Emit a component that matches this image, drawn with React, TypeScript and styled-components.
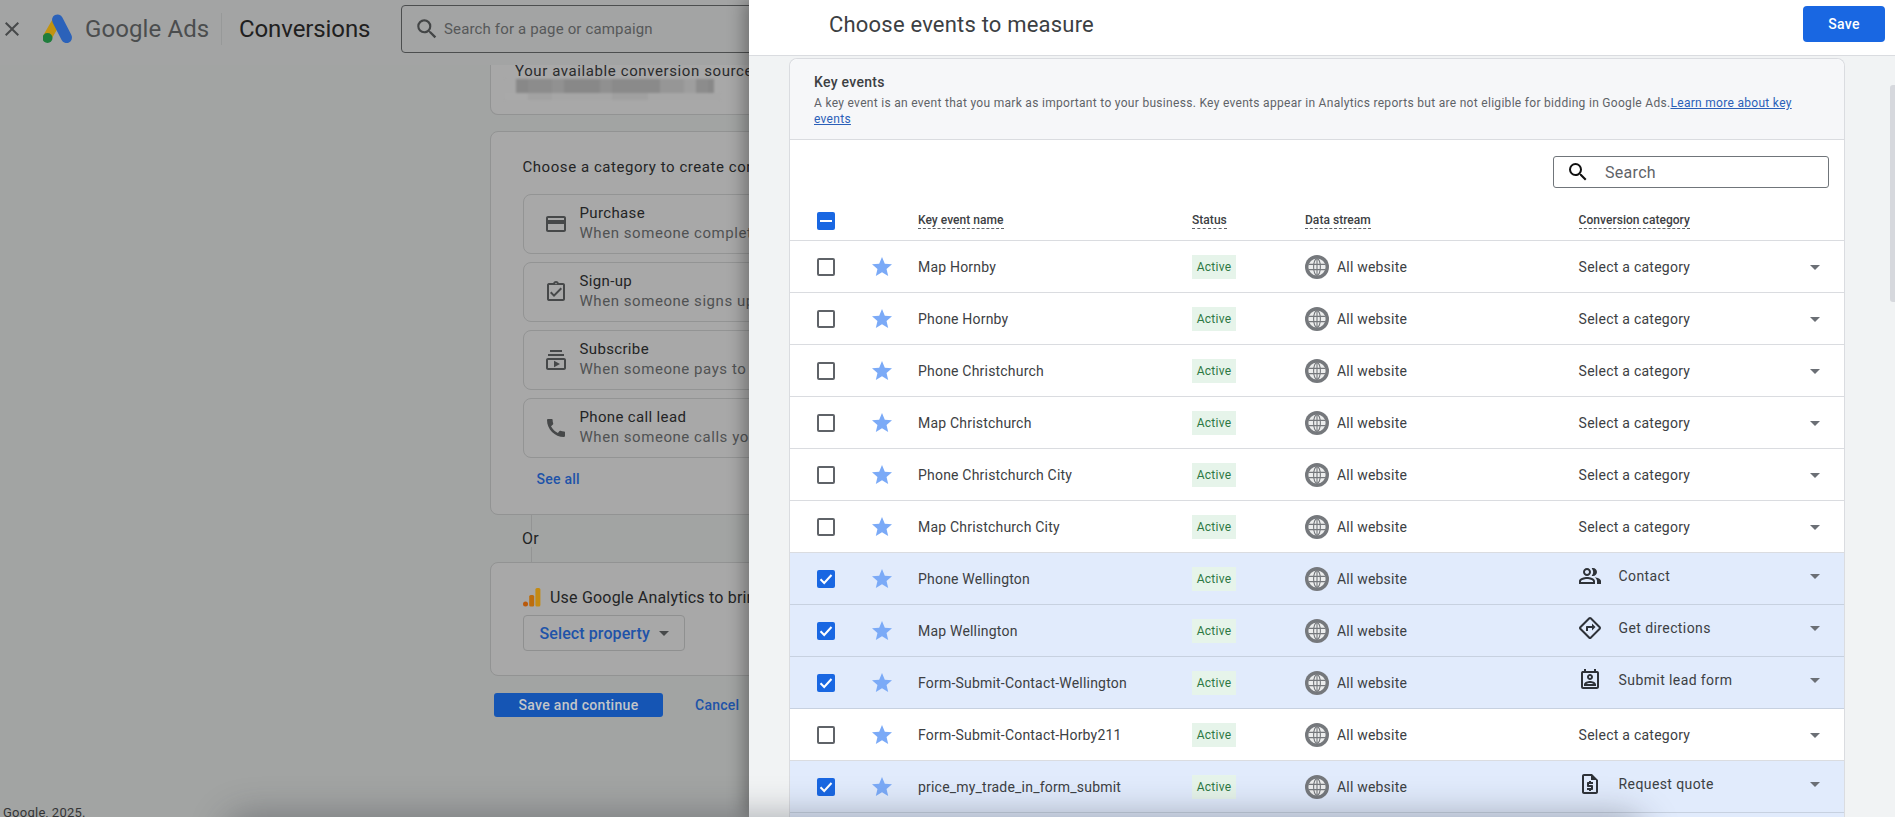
import React from "react";
import styled, { createGlobalStyle } from "styled-components";
import {
  MdArrowDropDown,
  MdCall,
  MdClose,
  MdCreditCard,
  MdOutlineAssignmentTurnedIn,
  MdOutlineDirections,
  MdOutlinePeopleAlt,
  MdOutlinePermContactCalendar,
  MdOutlineRequestQuote,
  MdOutlineSubscriptions,
  MdSearch,
  MdStar,
} from "react-icons/md";

const Global = createGlobalStyle`
  html, body { margin: 0; padding: 0; height: 817px; overflow: hidden; }
  body { font-family: Roboto, "Liberation Sans", sans-serif; background: #a2a4a3; }
  * { box-sizing: border-box; }
`;

const Screen = styled.div`
  position: relative;
  width: 1895px;
  height: 817px;
  overflow: hidden;
  display: flex;
  flex-direction: column;
  background: #a2a4a3;
`;

/* ---------- dimmed page behind the drawer ---------- */
const TopBar = styled.header`
  flex: none;
  height: 65px;
  padding-bottom: 7px;
  display: flex;
  align-items: center;
  background: #a3a4a4;
`;
const CloseWrap = styled.div`
  display: flex;
  width: 43px;
  color: #47494a;
`;
const Logo = styled.svg`
  flex: none;
  width: 42px;
  height: 34px;
`;
const Brand = styled.div`
  font-size: 24px;
  color: #4b4d4e;
  letter-spacing: 0.1px;
  width: 136px;
  white-space: nowrap;
`;
const BarDivider = styled.div`
  width: 1px;
  height: 32px;
  background: #979999;
  margin-right: 17px;
`;
const PageName = styled.div`
  font-size: 24px;
  color: #1f2020;
  width: 162px;
  letter-spacing: -0.1px;
  white-space: nowrap;
`;
const PageSearch = styled.div`
  flex: none;
  width: 600px;
  height: 48px;
  border: 1px solid #4c4e4f;
  border-radius: 4px;
  display: flex;
  align-items: center;
  padding-left: 12px;
  gap: 4px;
  color: #434546;
  font-size: 15px;
  letter-spacing: 0.15px;
  span { color: #565859; }
`;

const Main = styled.main`
  flex: 1;
  min-height: 0;
  padding-left: 490px;
  display: flex;
  flex-direction: column;
`;
const Card = styled.section`
  flex: none;
  width: 1000px;
  background: #a8a8a8;
  border: 1px solid #929393;
  border-radius: 8px;
`;
const SourceCard = styled(Card)`
  height: 50px;
  border-top: none;
  border-radius: 0 0 8px 8px;
  padding-left: 24px;
`;
const SourceText = styled.div`
  font-size: 15px;
  line-height: 20px;
  height: 17px;
  margin-top: -4px;
  color: #2a2b2c;
  letter-spacing: 0.6px;
  white-space: nowrap;
`;
const Mosaic = styled.div`
  margin: 1px 0 0 -10px;
  display: flex;
  flex-direction: column;
  width: 226px;
  filter: blur(0.8px);
`;
const MosaicRow = styled.div<{ $h: number }>`
  display: flex;
  height: ${(p) => p.$h}px;
`;
const Tile = styled.div<{ $w: number; $c: string }>`
  width: ${(p) => p.$w}px;
  background: ${(p) => p.$c};
`;

const CategoryCard = styled(Card)`
  margin-top: 16px;
  height: 384px;
  padding: 25px 0 0 31.5px;
`;
const CardTitle = styled.div`
  font-size: 15px;
  line-height: 20px;
  color: #232425;
  letter-spacing: 0.55px;
  white-space: nowrap;
`;
const CategoryList = styled.div`
  margin-top: 17px;
  display: flex;
  flex-direction: column;
  gap: 8.1px;
`;
const CategoryItem = styled.div`
  width: 900px;
  height: 60px;
  border: 1px solid #939494;
  border-radius: 8px;
  display: flex;
  align-items: center;
  padding-left: 20px;
  gap: 12px;
  color: #464849;
`;
const CategoryText = styled.div`
  display: flex;
  flex-direction: column;
  margin-top: -2px;
  white-space: nowrap;
`;
const CategoryName = styled.div`
  font-size: 15px;
  line-height: 20px;
  color: #232425;
  letter-spacing: 0.35px;
`;
const CategoryHint = styled.div`
  font-size: 15px;
  line-height: 20px;
  color: #505253;
  letter-spacing: 0.55px;
`;
const SeeAll = styled.div`
  margin: 11px 0 0 14px;
  font-size: 14px;
  line-height: 20px;
  font-weight: 500;
  color: #2053a8;
  letter-spacing: 0.25px;
`;
const Connector = styled.div`
  flex: none;
  height: 47px;
  display: flex;
  flex-direction: column;
  padding-left: 32px;
`;
const ConnectorLine = styled.div`
  flex: 1;
  width: 1px;
  margin-left: 9px;
  background: #939494;
`;
const OrLabel = styled.div`
  font-size: 16px;
  line-height: 16px;
  color: #232425;
  letter-spacing: 0.2px;
`;
const AnalyticsCard = styled(Card)`
  height: 114px;
  padding: 23px 0 0 32px;
`;
const AnalyticsRow = styled.div`
  display: flex;
  align-items: center;
  gap: 9px;
  height: 22px;
  font-size: 16px;
  color: #232425;
  letter-spacing: 0.2px;
  white-space: nowrap;
`;
const SelectProperty = styled.div`
  margin-top: 7px;
  width: 162px;
  height: 36px;
  border: 1px solid #8f9090;
  border-radius: 4px;
  padding-left: 15.5px;
  display: flex;
  align-items: center;
  font-size: 16px;
  font-weight: 500;
  color: #2053a8;
  letter-spacing: 0.1px;
  white-space: nowrap;
  svg { color: #47494a; margin-left: 2px; }
`;
const Actions = styled.div`
  flex: none;
  margin: 17px 0 0 4px;
  display: flex;
  align-items: center;
  gap: 32px;
`;
const PrimaryDim = styled.div`
  width: 169px;
  height: 24px;
  border-radius: 3px;
  background: #1555b4;
  color: #c3c6c9;
  font-size: 14px;
  font-weight: 500;
  letter-spacing: 0.3px;
  display: flex;
  align-items: center;
  justify-content: center;
`;
const TextLink = styled.div`
  font-size: 14px;
  font-weight: 500;
  letter-spacing: 0.25px;
  color: #2053a8;
`;
const Footer = styled.footer`
  flex: none;
  height: 10px;
  line-height: 12px;
  overflow: hidden;
  padding-left: 3px;
  font-size: 13px;
  letter-spacing: 0.25px;
  color: #343536;
`;

/* ---------- drawer ---------- */
const Drawer = styled.aside`
  position: absolute;
  top: 0;
  right: 0;
  bottom: 0;
  width: 1146px;
  background: #f1f3f4;
  box-shadow: -5px 0 16px rgba(0, 0, 0, 0.32);
  display: flex;
  flex-direction: column;
`;
const DrawerHead = styled.div`
  flex: none;
  height: 56px;
  background: #fff;
  border-bottom: 1px solid #dadce0;
  display: flex;
  align-items: center;
  justify-content: space-between;
  padding: 0 10px 7px 80px;
`;
const DrawerTitle = styled.h1`
  margin: 0;
  font-size: 22px;
  font-weight: 400;
  letter-spacing: 0.2px;
  color: #3c4043;
`;
const SaveButton = styled.button`
  width: 82px;
  height: 36px;
  border: none;
  border-radius: 4px;
  background: #1967e2;
  color: #fff;
  font: 500 14px Roboto, sans-serif;
  letter-spacing: 0.25px;
`;
const DrawerBody = styled.div`
  flex: 1;
  min-height: 0;
  padding: 2px 50px 0 40px;
`;
const Scrollbar = styled.div`
  position: absolute;
  top: 85px;
  right: 0;
  width: 5px;
  height: 217px;
  background: #d6d8dd;
  border-radius: 3px 0 0 3px;
`;
const EventsCard = styled.section`
  background: #fff;
  border: 1px solid #dadce0;
  border-bottom: none;
  border-radius: 8px 8px 0 0;
`;
const EventsHead = styled.div`
  height: 81px;
  padding: 13px 24px 0;
  background: #f6f7f9;
  border-bottom: 1px solid #dadce0;
  border-radius: 8px 8px 0 0;
`;
const EventsTitle = styled.div`
  font-size: 14px;
  line-height: 20px;
  font-weight: 500;
  letter-spacing: 0.3px;
  color: #3c4043;
`;
const EventsDesc = styled.p`
  margin: 3px 0 0;
  width: 1000px;
  font-size: 12px;
  line-height: 16px;
  letter-spacing: 0.3px;
  color: #5f6368;
  a { color: #2b5fb8; text-decoration: underline; }
`;
const SearchRow = styled.div`
  height: 48px;
  display: flex;
  align-items: flex-end;
  justify-content: flex-end;
  padding-right: 15px;
`;
const SearchField = styled.div`
  width: 276px;
  height: 32px;
  border: 1px solid #70757a;
  border-radius: 3px;
  display: flex;
  align-items: center;
  padding-left: 12px;
  gap: 15px;
  color: #111;
  font-size: 16px;
  letter-spacing: 0.3px;
  span { color: #5f6368; }
`;

const columns = `
  display: grid;
  grid-template-columns: 55px 46px 274px 113px 273.6px 1fr;
  align-items: center;
  padding-left: 27px;
`;
const HeadRow = styled.div`
  ${columns}
  height: 53px;
  padding-top: 13px;
  border-bottom: 1px solid #dadce0;
`;
const HeadCell = styled.span<{ $col: number }>`
  grid-column: ${(p) => p.$col};
  justify-self: start;
  font-size: 12px;
  line-height: 16px;
  font-weight: 500;
  letter-spacing: 0.04px;
  color: #3c4043;
  border-bottom: 1px dashed #5f6368;
`;
const Row = styled.div<{ $selected?: boolean }>`
  ${columns}
  height: 52px;
  background: ${(p) => (p.$selected ? "#e1ebfc" : "#fff")};
  border-bottom: 1px solid ${(p) => (p.$selected ? "#c7d1e0" : "#dadce0")};
`;
const Check = styled.div<{ $on?: boolean }>`
  width: 18px;
  height: 18px;
  border-radius: 2px;
  display: flex;
  align-items: center;
  justify-content: center;
  background: ${(p) => (p.$on ? "#1967e2" : "#fff")};
  border: ${(p) => (p.$on ? "none" : "2px solid #5f6368")};
`;
const DashMark = styled.div`
  width: 12px;
  height: 2px;
  background: #fff;
`;
const Star = styled(MdStar)`
  color: #7baaf7;
  margin-left: -2px;
  display: block;
`;
const EventName = styled.span`
  font-size: 14px;
  letter-spacing: 0.2px;
  color: #3c4043;
  white-space: nowrap;
`;
const Chip = styled.span`
  justify-self: start;
  height: 24px;
  width: 44px;
  display: flex;
  align-items: center;
  justify-content: center;
  background: #e6f4ea;
  font-size: 12px;
  letter-spacing: 0.25px;
  color: #2d7843;
`;
const Stream = styled.div`
  display: flex;
  align-items: center;
  gap: 8px;
  font-size: 14px;
  letter-spacing: 0.2px;
  color: #3c4043;
`;
const CategoryCell = styled.div<{ $picked?: boolean }>`
  display: flex;
  align-items: center;
  justify-content: space-between;
  padding-right: 17px;
  padding-bottom: ${(p) => (p.$picked ? 6 : 0)}px;
  font-size: 14px;
  letter-spacing: 0.25px;
  color: #3c4043;
  svg { flex: none; }
`;
const CategoryLabel = styled.div`
  display: flex;
  align-items: center;
  gap: 17px;
  letter-spacing: 0.4px;
  svg { color: #2e3238; margin-left: -1px; }
`;
const Arrow = styled(MdArrowDropDown)`
  color: #6b6f75;
`;

const BottomGlow = styled.div`
  position: absolute;
  left: 230px;
  width: 1410px;
  top: 820px;
  height: 40px;
  border-radius: 20px;
  box-shadow: 0 0 34px 6px rgba(40, 45, 55, 0.34);
`;

/* ---------- drawings ---------- */
const AdsLogo = () => (
  <Logo viewBox="43 11 42 34" aria-hidden="true">
    <line x1="47.5" y1="36" x2="57" y2="19.5" stroke="#c2930f" strokeWidth="9" strokeLinecap="round" />
    <line x1="57.5" y1="19" x2="66.5" y2="36.5" stroke="#2b62ba" strokeWidth="11" strokeLinecap="round" />
    <circle cx="47.5" cy="37" r="5" fill="#1f7d3c" />
  </Logo>
);
const AnalyticsIcon = () => (
  <svg width="18" height="20" viewBox="0 0 18 20" aria-hidden="true">
    <rect x="0" y="14.5" width="5" height="5" rx="2.5" fill="#b9590b" />
    <rect x="6.2" y="8" width="5" height="11.5" rx="1.6" fill="#bd6d0c" />
    <rect x="12.4" y="1" width="5" height="18.5" rx="1.6" fill="#c48a12" />
  </svg>
);
const Globe = () => (
  <svg width="24" height="24" viewBox="0 0 24 24" aria-hidden="true">
    <circle cx="12" cy="12" r="12" fill="#75787c" />
    <circle cx="12" cy="12" r="8.6" fill="#eceded" />
    <ellipse cx="12" cy="12" rx="3.4" ry="8.4" fill="none" stroke="#75787c" strokeWidth="1.1" />
    <path d="M3.6 9.4h16.8M3.6 14.6h16.8M12 3.5v17" fill="none" stroke="#75787c" strokeWidth="1.1" />
  </svg>
);
const Tick = () => (
  <svg width="14" height="12" viewBox="0 0 14 12" aria-hidden="true">
    <path d="M1.5 6.2 5.2 10 12.5 2" fill="none" stroke="#fff" strokeWidth="2" />
  </svg>
);

const mosaicTop = [
  { w: 11, c: "#a8a8a8" },
  { w: 12, c: "#888888" },
  { w: 24, c: "#8c8c8c" },
  { w: 12, c: "#919191" },
  { w: 36, c: "#888888" },
  { w: 12, c: "#909090" },
  { w: 48, c: "#8a8a8a" },
  { w: 24, c: "#969696" },
  { w: 12, c: "#9e9e9e" },
  { w: 12, c: "#8c8c8c" },
  { w: 6, c: "#888888" },
];
const mosaicBottom = [
  { w: 23, c: "#a9a9a9" },
  { w: 24, c: "#a2a2a2" },
  { w: 60, c: "#a6a6a6" },
  { w: 36, c: "#a0a0a0" },
  { w: 72, c: "#a7a7a7" },
];

const categories = [
  { icon: <MdCreditCard size={24} />, name: "Purchase", hint: "When someone completes a purchase" },
  { icon: <MdOutlineAssignmentTurnedIn size={24} />, name: "Sign-up", hint: "When someone signs up" },
  { icon: <MdOutlineSubscriptions size={24} />, name: "Subscribe", hint: "When someone pays to subscribe" },
  { icon: <MdCall size={24} />, name: "Phone call lead", hint: "When someone calls your business" },
];

type Picked = { icon: React.ReactNode; label: string };
const contact: Picked = { icon: <MdOutlinePeopleAlt size={24} />, label: "Contact" };
const directions: Picked = { icon: <MdOutlineDirections size={24} />, label: "Get directions" };
const lead: Picked = { icon: <MdOutlinePermContactCalendar size={24} />, label: "Submit lead form" };
const quote: Picked = { icon: <MdOutlineRequestQuote size={24} />, label: "Request quote" };

const events: { name: string; picked?: Picked }[] = [
  { name: "Map Hornby" },
  { name: "Phone Hornby" },
  { name: "Phone Christchurch" },
  { name: "Map Christchurch" },
  { name: "Phone Christchurch City" },
  { name: "Map Christchurch City" },
  { name: "Phone Wellington", picked: contact },
  { name: "Map Wellington", picked: directions },
  { name: "Form-Submit-Contact-Wellington", picked: lead },
  { name: "Form-Submit-Contact-Horby211" },
  { name: "price_my_trade_in_form_submit", picked: quote },
];

export default function App() {
  return (
    <Screen>
      <Global />
      <TopBar>
        <CloseWrap>
          <MdClose size={24} />
        </CloseWrap>
        <AdsLogo />
        <Brand>Google Ads</Brand>
        <BarDivider />
        <PageName>Conversions</PageName>
        <PageSearch>
          <MdSearch size={26} />
          <span>Search for a page or campaign</span>
        </PageSearch>
      </TopBar>
      <Main>
        <SourceCard>
          <SourceText>Your available conversion sources</SourceText>
          <Mosaic>
            <MosaicRow $h={14}>
              {mosaicTop.map((t, i) => (
                <Tile key={i} $w={t.w} $c={t.c} />
              ))}
            </MosaicRow>
            <MosaicRow $h={7}>
              {mosaicBottom.map((t, i) => (
                <Tile key={i} $w={t.w} $c={t.c} />
              ))}
            </MosaicRow>
          </Mosaic>
        </SourceCard>
        <CategoryCard>
          <CardTitle>Choose a category to create conversions</CardTitle>
          <CategoryList>
            {categories.map((c) => (
              <CategoryItem key={c.name}>
                {c.icon}
                <CategoryText>
                  <CategoryName>{c.name}</CategoryName>
                  <CategoryHint>{c.hint}</CategoryHint>
                </CategoryText>
              </CategoryItem>
            ))}
          </CategoryList>
          <SeeAll>See all</SeeAll>
        </CategoryCard>
        <Connector>
          <ConnectorLine />
          <OrLabel>Or</OrLabel>
          <ConnectorLine />
        </Connector>
        <AnalyticsCard>
          <AnalyticsRow>
            <AnalyticsIcon />
            Use Google Analytics to bring in conversions
          </AnalyticsRow>
          <SelectProperty>
            Select property
            <MdArrowDropDown size={24} />
          </SelectProperty>
        </AnalyticsCard>
        <Actions>
          <PrimaryDim>Save and continue</PrimaryDim>
          <TextLink>Cancel</TextLink>
        </Actions>
      </Main>
      <Footer>Google, 2025.</Footer>

      <Drawer>
        <DrawerHead>
          <DrawerTitle>Choose events to measure</DrawerTitle>
          <SaveButton>Save</SaveButton>
        </DrawerHead>
        <DrawerBody>
          <EventsCard>
            <EventsHead>
              <EventsTitle>Key events</EventsTitle>
              <EventsDesc>
                A key event is an event that you mark as important to your business. Key events appear in
                Analytics reports but are not eligible for bidding in Google Ads.
                <a href="#learn">Learn more about key events</a>
              </EventsDesc>
            </EventsHead>
            <SearchRow>
              <SearchField>
                <MdSearch size={24} />
                <span>Search</span>
              </SearchField>
            </SearchRow>
            <HeadRow>
              <Check $on>
                <DashMark />
              </Check>
              <HeadCell $col={3}>Key event name</HeadCell>
              <HeadCell $col={4}>Status</HeadCell>
              <HeadCell $col={5}>Data stream</HeadCell>
              <HeadCell $col={6}>Conversion category</HeadCell>
            </HeadRow>
            {events.map((e) => (
              <Row key={e.name} $selected={!!e.picked}>
                <Check $on={!!e.picked}>{e.picked && <Tick />}</Check>
                <Star size={24} />
                <EventName>{e.name}</EventName>
                <Chip>Active</Chip>
                <Stream>
                  <Globe />
                  All website
                </Stream>
                <CategoryCell $picked={!!e.picked}>
                  {e.picked ? (
                    <CategoryLabel>
                      {e.picked.icon}
                      {e.picked.label}
                    </CategoryLabel>
                  ) : (
                    "Select a category"
                  )}
                  <Arrow size={24} />
                </CategoryCell>
              </Row>
            ))}
            <Row $selected />
          </EventsCard>
        </DrawerBody>
        <Scrollbar />
      </Drawer>
      <BottomGlow />
    </Screen>
  );
}
